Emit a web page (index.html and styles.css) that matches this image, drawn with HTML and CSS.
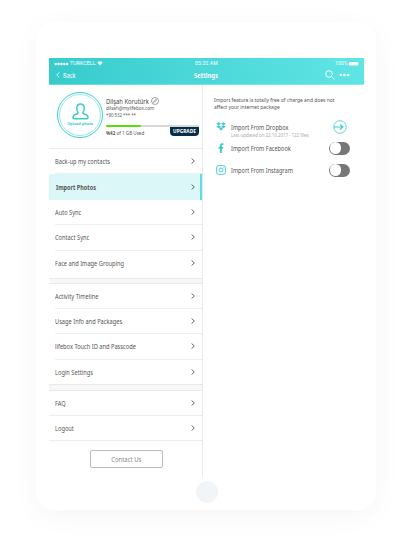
FILE: index.html
```html
<!DOCTYPE html>
<html lang="en">
<head>
<meta charset="utf-8">
<title>Settings</title>
<link rel="stylesheet" href="styles.css">
</head>
<body>
<svg class="defs" width="0" height="0"><symbol id="chev" viewBox="0 0 4 6"><path d="M.6.5 3.3 3 .6 5.5" fill="none" stroke="currentColor" stroke-width=".9"/></symbol></svg>
<div class="device">
  <div class="screen">
    <header class="top">
      <div class="status">
        <div class="carrier"><svg width="15" height="4" viewBox="0 0 15 4" fill="#fff"><circle cx="1.6" cy="2" r="1.25"/><circle cx="4.5" cy="2" r="1.25"/><circle cx="7.4" cy="2" r="1.25"/><circle cx="10.3" cy="2" r="1.25"/><circle cx="13.2" cy="2" r="1.25"/></svg><span>TURKCELL</span><svg width="6" height="5" viewBox="0 0 6 5"><path d="M.2 1.5Q3-.8 5.800 1.500L3 4.500Z" fill="#fff" fill-opacity=".85"/></svg></div>
        <div class="time">05:32 AM</div>
        <div class="power"><span>100%</span><svg width="10" height="4" viewBox="0 0 10 4"><rect width="9" height="3.5" rx=".5" fill="#fff"/><path d="M9.5 1v1.5" stroke="#fff" stroke-width=".6"/></svg></div>
      </div>
      <div class="nav">
        <div class="back"><svg width="4" height="6" viewBox="0 0 4 6"><path d="M3.3.4.7 3l2.6 2.6" fill="none" stroke="#fff" stroke-width=".8"/></svg><span class="t">Back</span></div>
        <div class="title"><span>Settings</span></div>
        <div class="tools"><svg width="10" height="10" viewBox="0 0 10 10"><circle cx="4" cy="4" r="3.3" fill="none" stroke="#fff" stroke-width=".9"/><path d="m6.4 6.4 3 3" stroke="#fff" stroke-width=".9"/></svg><svg width="11" height="4" viewBox="0 0 11 4" fill="#fff"><circle cx="1.7" cy="2" r="1.35"/><circle cx="5.4" cy="2" r="1.35"/><circle cx="9.1" cy="2" r="1.35"/></svg></div>
      </div>
    </header>
    <div class="columns">
      <aside class="side">
        <section class="profile">
          <div class="avatar">
            <svg width="17" height="17" viewBox="0 0 17 17"><path d="M6 9.2C4.2 7.2 3.8 1 8.5 1S12.800 7.2 11 9.2c-.5 1.100.2 1.500 2 2 2 .5 3 1.500 3 3.300 0 .8-.4 1.300-1.200 1.300H2.200C1.400 15.800 1 15.300 1 14.500c0-1.800 1-2.800 3-3.300 1.800-.5 2.500-.9 2-2Z" fill="none" stroke="#3dcace" stroke-width="1.500"/></svg>
            <span>Upload photo</span>
          </div>
          <div class="who">
            <div class="name"><span class="t">Dilşah Korutürk</span><svg width="8" height="8" viewBox="0 0 8 8" fill="none" stroke="#666"><circle cx="4" cy="4" r="3.500" stroke-width=".6"/><path d="m2.500 5.500.3-1L5 2.300l.7.700-2.200 2.200Z" stroke-width=".6"/></svg></div>
            <div class="mail"><span>dilsah@mylifebox.com</span></div>
            <div class="phone"><span>+90 532 *** **</span></div>
            <div class="meter"><div class="fill"></div></div>
            <div class="usage"><span class="used"><b>%42</b> of 1 GB Used</span><span class="upgrade"><span>UPGRADE</span></span></div>
          </div>
        </section>
        <nav class="g1">
          <div class="row"><span class="t">Back-up my contacts</span><svg><use href="#chev"/></svg></div>
          <div class="row active"><span class="t">Import Photos</span><svg><use href="#chev"/></svg></div>
          <div class="row"><span class="t">Auto Sync</span><svg><use href="#chev"/></svg></div>
          <div class="row"><span class="t">Contact Sync</span><svg><use href="#chev"/></svg></div>
          <div class="row"><span class="t">Face and Image Grouping</span><svg><use href="#chev"/></svg></div>
        </nav>
        <div class="band"></div>
        <nav class="g2">
          <div class="row"><span class="t">Activity Timeline</span><svg><use href="#chev"/></svg></div>
          <div class="row"><span class="t">Usage Info and Packages</span><svg><use href="#chev"/></svg></div>
          <div class="row"><span class="t">lifebox Touch ID and Passcode</span><svg><use href="#chev"/></svg></div>
          <div class="row"><span class="t">Login Settings</span><svg><use href="#chev"/></svg></div>
        </nav>
        <div class="band"></div>
        <nav class="g3">
          <div class="row"><span class="t">FAQ</span><svg><use href="#chev"/></svg></div>
          <div class="row"><span class="t">Logout</span><svg><use href="#chev"/></svg></div>
        </nav>
        <div class="contact"><span>Contact Us</span></div>
      </aside>
      <main class="main">
        <p class="intro"><span>Import feature is totally free of charge and does not<br>affect your internet package</span></p>
        <div class="src first">
          <svg class="ico" width="10" height="9" viewBox="0 0 10 9" fill="#3dcace"><path d="m2.800.2 2.200 1.500L2.400 3.200.2 1.800ZM7.200.2 5 1.700l2.600 1.500 2.200-1.400ZM2.400 3.200 5 4.800 2.900 6.300.2 4.700ZM7.600 3.200 5 4.800l2.100 1.500 2.700-1.600ZM5 5.300l2 1.500-2 1.700-2-1.700Z"/></svg>
          <div class="label"><span class="t">Import From Dropbox</span><small>Last updated on 22.10.2017 - 122 files</small></div>
          <svg class="go" width="14" height="14" viewBox="0 0 14 14" fill="none" stroke="#3dcace"><circle cx="7" cy="7" r="6.300" stroke-width=".8"/><path d="M1 7h9M7 4.500 10 7 7 9.500" stroke-width="1.100"/></svg>
        </div>
        <div class="src">
          <svg class="ico" width="10" height="10" viewBox="0 0 10 10"><path d="M3.900 9.900V5.700H2.600V3.900h1.300V2.600Q3.900.2 6 .2h1.400V1.900H6.600q-.8 0-.8.800v1.200h1.500L7.100 5.700H5.800v4.200Z" fill="#3dcace"/></svg>
          <div class="label"><span class="t">Import From Facebook</span></div>
          <div class="toggle"></div>
        </div>
        <div class="src">
          <svg class="ico" width="10" height="10" viewBox="0 0 10 10" fill="none" stroke="#3dcace"><rect x=".6" y=".6" width="8.800" height="8.800" rx="2.200" stroke-width=".9"/><circle cx="5" cy="5" r="2" stroke-width=".9"/><circle cx="7.500" cy="2.500" r=".3" stroke-width=".5"/></svg>
          <div class="label"><span class="t">Import From Instagram</span></div>
          <div class="toggle"></div>
        </div>
      </main>
    </div>
  </div>
  <div class="home"></div>
</div>
</body>
</html>
```
FILE: styles.css
```css
* { box-sizing: border-box; }
body { margin: 0; width: 412px; height: 539px; overflow: hidden; background: #fff; font-family: "Noto Sans", sans-serif; font-size: 7.2px; line-height: 10px; color: #555; }
.defs { display: block; }
span { white-space: nowrap; }
.t, .intro span, .title span, .contact span { display: inline-block; transform: scaleX(.79); transform-origin: left; }
.device { width: 340px; height: 488px; margin: 22px 0 0 36px; padding: 36px 13px 0; border-radius: 18px; background: #fff; box-shadow: 0 6px 28px rgba(0,0,0,.04); }
.screen { width: 315px; height: 419px; }
.top { height: 27px; background: linear-gradient(75deg, #37cbcc, #60e5e5); color: #fff; border-bottom: 1px solid rgba(255,255,255,.25); }
.status { display: grid; grid-template-columns: 1fr 1fr 1fr; height: 9px; padding: 1px 5px 0; font: 5.2px/9px Roboto, sans-serif; letter-spacing: .1px; }
.carrier { display: flex; align-items: center; gap: 1px; }
.time { text-align: center; }
.power { display: flex; justify-content: flex-end; align-items: center; gap: 1px; }
.nav { display: grid; grid-template-columns: 1fr 1fr 1fr; height: 17px; padding: 0 14px 1px 7px; align-items: center; }
.back { display: flex; align-items: center; gap: 3px; }
.title { padding-left: 40px; font-weight: 700; font-size: 7.5px; }
.title span { transform: scaleX(.78); }
.tools { display: flex; justify-content: flex-end; align-items: center; gap: 4px; }
.columns { display: flex; height: 392px; }
.side { width: 154px; border-right: 1px solid #e7eaea; }
.profile { display: flex; height: 64px; border-bottom: 1px solid #e9eded; padding: 7px 0 0 8px; gap: 3px; }
.avatar { display: flex; flex-direction: column; align-items: center; width: 46px; height: 46px; border: 1.2px solid #3dcace; border-radius: 50%; outline: .6px solid #9ce6e6; outline-offset: -3.5px; padding-top: 10px; color: #3dcace; font-size: 4.2px; line-height: 6px; font-weight: 700; }
.avatar span { transform: scaleX(.92); margin-top: 1px; }
.who { width: 93px; padding-top: 4px; }
.name { display: flex; align-items: center; height: 9px; font-size: 7.4px; color: #444; }
.name .t { width: 45px; }
.mail, .phone { height: 7px; font-size: 5.5px; line-height: 7px; }
.phone { font-size: 5.2px; }
.mail span, .phone span, .used { display: inline-block; transform: scaleX(.83); transform-origin: left; }
.meter { height: 2px; margin-top: 6px; background: #d8d8d8; border-radius: 1px; }
.fill { width: 35px; height: 2px; background: #55e00c; border-radius: 1px; }
.usage { display: flex; justify-content: space-between; font-size: 5.5px; }
.used { padding-top: 1px; width: 45px; }
.upgrade { width: 29px; height: 9px; border-radius: 0 0 4px 4px; background: #062e47; color: #fff; font-weight: 700; font-size: 5.2px; line-height: 8px; text-align: center; }
.upgrade span { display: block; transform: scaleX(.93); }
.row { display: flex; justify-content: space-between; align-items: center; height: 25.4px; margin-left: 6px; padding-right: 7px; border-bottom: 1px solid #edf0f0; }
.row svg { width: 4px; height: 6px; }
.row:last-child { border: 0; }
.row.active { margin-left: 0; padding: 0 5px 0 7px; background: #dbf7f8; border: 0; border-right: 2px solid #5ddfe2; font-weight: 700; }
.row.active .t { transform: scaleX(.77); }
.g1 .row:last-child { height: 27px; padding-bottom: 2px; }
.g2 .row { height: 25.2px; }
.g2 .row:last-child { height: 24.8px; }
.g3 .row { height: 25.4px; margin-left: 0; padding-left: 6px; border-bottom: 1px solid #e9eded; }
.band { height: 6.4px; background: #f8f8f8; border: 1px solid #e7eaea; border-width: 1px 0; }
.contact { width: 73px; height: 18px; margin: 9px 0 0 41px; border: 1px solid #bbb; border-radius: 2px; text-align: center; line-height: 16px; color: #888; }
.contact span { transform-origin: center; transform: scaleX(.82); }
.main { padding: 11.5px 0 0 11px; width: 161px; }
.intro { margin: 0; height: 19.5px; font-size: 6px; line-height: 7.4px; }
.intro span { transform: scaleX(.825); }
.src { display: flex; align-items: center; height: 22px; padding: 0 14px 0 2px; }
.label { flex: 1; padding-left: 5px; }
.label .t { transform: scaleX(.775); }
.first { height: 21px; }
.first .label { position: relative; }
.label small { position: absolute; left: 5px; top: 8.5px; font-size: 5.1px; white-space: nowrap; color: #aaa; transform: scaleX(.86); transform-origin: left; }
.go { margin-right: 3px; }
.toggle { width: 21px; height: 13px; border-radius: 7px; background: #777; padding: .8px; }
.toggle::before { content: ""; display: block; width: 11.4px; height: 11.4px; border-radius: 50%; background: #fff; }
.home { width: 22px; height: 22px; margin: 4px 0 0 147px; border-radius: 50%; background: #f1f5f8; }
```
